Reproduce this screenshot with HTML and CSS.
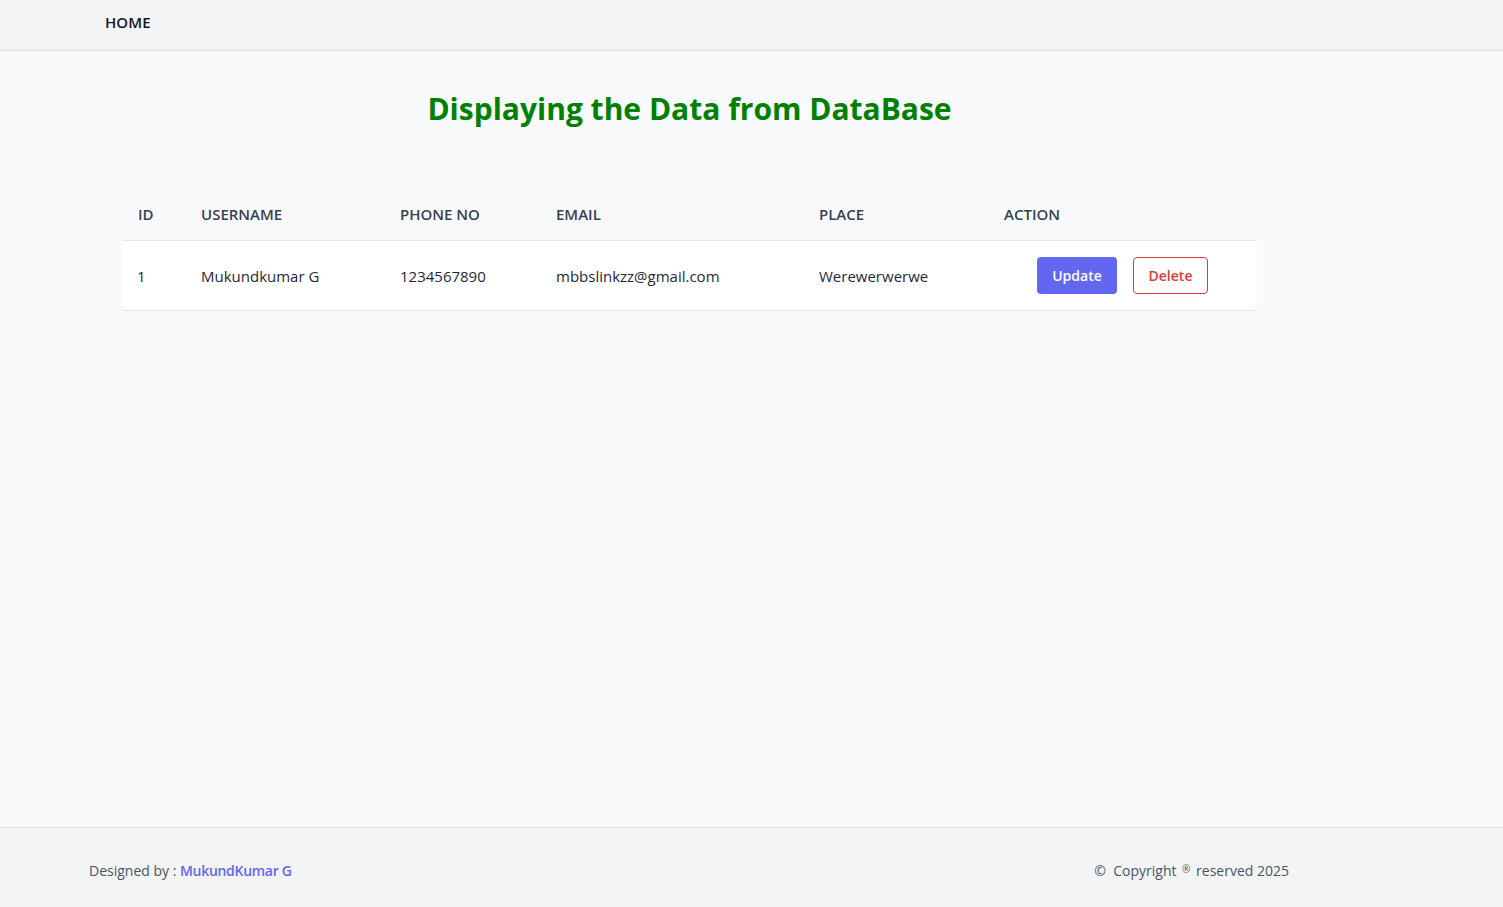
FILE: index.html
```html
<!DOCTYPE html>
<html lang="en">
<head>
<meta charset="utf-8">
<title>Displaying the Data from DataBase</title>
<link rel="stylesheet" href="styles.css">
</head>
<body>
<div class="page">
  <nav class="nav">
    <a class="nav-link" href="#">HOME</a>
  </nav>
  <main class="main">
    <div class="container">
      <h1 class="title">Displaying the Data from DataBase</h1>
      <table class="data-table">
        <thead>
          <tr>
            <th class="c-id">ID</th>
            <th class="c-user">USERNAME</th>
            <th class="c-phone">PHONE NO</th>
            <th class="c-email">EMAIL</th>
            <th class="c-place">PLACE</th>
            <th class="c-action">ACTION</th>
          </tr>
        </thead>
        <tbody>
          <tr>
            <td>1</td>
            <td>Mukundkumar G</td>
            <td>1234567890</td>
            <td>mbbslinkzz@gmail.com</td>
            <td>Werewerwerwe</td>
            <td class="actions">
              <div class="btns">
                <button class="btn btn-update">Update</button>
                <button class="btn btn-delete">Delete</button>
              </div>
            </td>
          </tr>
        </tbody>
      </table>
    </div>
  </main>
  <footer class="footer">
    <div class="footer-left">Designed by : <span class="author">MukundKumar G</span></div>
    <div class="footer-right">©&nbsp; Copyright <span class="reg">®</span> reserved 2025</div>
  </footer>
</div>
</body>
</html>
```
FILE: styles.css
```css
* { box-sizing: border-box; }
html, body { margin: 0; padding: 0; }
body {
  font-family: "Open Sans", "Noto Sans", sans-serif;
  background: #f9fafb;
  color: #111827;
}
.page {
  min-height: 907px;
  display: flex;
  flex-direction: column;
}
.nav {
  height: 51px;
  background: #f3f4f6;
  border-bottom: 1px solid #dcdde0;
  display: flex;
  align-items: center;
  padding-left: 105px;
}
.nav-link {
  font-size: 15px;
  font-weight: 600;
  color: #111827;
  text-decoration: none;
  letter-spacing: 0.1px;
  margin-top: -6px;
}
.main {
  flex: 1;
  padding-left: 122px;
}
.container {
  width: 1135px;
}
.title {
  margin: 0;
  padding-top: 38px;
  text-align: center;
  color: #008000;
  font-size: 30px;
  font-weight: 700;
  line-height: 40px;
}
.data-table {
  margin-top: 61px;
  width: 1135px;
  border-collapse: collapse;
  table-layout: fixed;
}
.data-table th {
  text-align: left;
  font-size: 15px;
  font-weight: 600;
  color: #374151;
  padding: 14px 0 16px 16px;
  border-bottom: 1px solid #e5e7eb;
  line-height: 20px;
}
.c-id { width: 63px; }
.c-user { width: 199px; }
.c-phone { width: 156px; }
.c-email { width: 263px; }
.c-place { width: 185px; }
.c-action { width: 269px; }
.data-table tbody tr {
  background: #ffffff;
}
.data-table td {
  font-size: 15px;
  color: #1f2937;
  padding: 16px 0 16px 16px;
  border-bottom: 1px solid #e5e7eb;
  height: 70px;
  line-height: 20px;
}
.data-table tbody td:first-child { padding-left: 15px; border-bottom-left-radius: 12px; }
.data-table tbody td:last-child { border-bottom-right-radius: 12px; }
.data-table td.actions { padding-left: 0; }
.btns {
  display: flex;
  justify-content: center;
  gap: 16px;
}
.btn {
  font-family: inherit;
  font-size: 14px;
  font-weight: 600;
  height: 37px;
  border-radius: 4px;
  cursor: pointer;
}
.btn-update {
  width: 80px;
  background: #6366f1;
  color: #ffffff;
  border: none;
}
.btn-delete {
  width: 75px;
  background: #ffffff;
  color: #dc3b3b;
  border: 1px solid #dc3b3b;
}
.footer {
  height: 80px;
  background: #f3f4f6;
  border-top: 1px solid #dcdde0;
  display: flex;
  align-items: center;
  justify-content: space-between;
  padding: 6px 214px 0 89px;
  font-size: 14px;
  color: #4b5563;
}
.author {
  color: #6366f1;
  font-weight: 600;
  letter-spacing: -0.3px;
}
.reg {
  font-size: 10px;
  vertical-align: 3px;
  margin: 0 2px;
}
```
